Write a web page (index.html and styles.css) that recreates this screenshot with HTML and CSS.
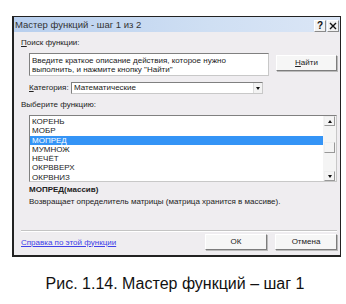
FILE: index.html
```html
<!DOCTYPE html>
<html lang="ru">
<head>
    <meta charset="UTF-8">
    <title>Мастер функций</title>
    <link rel="stylesheet" href="styles.css">
</head>
<body>
    <div class="page">
        <!-- Dialog window -->
        <div class="dialog">
            <div class="titlebar">
                <span class="title">Мастер функций - шаг 1 из 2</span>
                <div class="title-buttons">
                    <span class="tbtn">?</span>
                    <span class="tbtn">
                        <svg width="8" height="8" viewBox="0 0 8 8"><path d="M1 1 L7 7 M7 1 L1 7" stroke="#111" stroke-width="1.4"/></svg>
                    </span>
                </div>
            </div>

            <div class="content">
                <div class="label"><u>П</u>оиск функции:</div>

                <div class="search-row">
                    <div class="search-box">Введите краткое описание действия, которое нужно<br>выполнить, и нажмите кнопку "Найти"</div>
                    <div class="btn find-btn"><u>Н</u>айти</div>
                </div>

                <div class="category-row">
                    <span class="cat-label"><u>К</u>атегория:</span>
                    <div class="combo">
                        <span>Математические</span>
                        <span class="combo-arrow"></span>
                    </div>
                </div>

                <div class="label list-label">Выберите функцию:</div>

                <div class="list">
                    <div class="items">
                        <div class="item">КОРЕНЬ</div>
                        <div class="item">МОБР</div>
                        <div class="item selected">МОПРЕД</div>
                        <div class="item">МУМНОЖ</div>
                        <div class="item">НЕЧЁТ</div>
                        <div class="item">ОКРВВЕРХ</div>
                        <div class="item">ОКРВНИЗ</div>
                    </div>
                    <div class="scrollbar">
                        <span class="sb-btn"><span class="arr-up"></span></span>
                        <span class="sb-thumb"></span>
                        <span class="sb-btn"><span class="arr-down"></span></span>
                    </div>
                </div>

                <div class="signature">МОПРЕД(массив)</div>
                <div class="description">Возвращает определитель матрицы (матрица хранится в массиве).</div>

                <div class="separator"></div>

                <div class="footer">
                    <a class="help-link" href="#">Справка по этой функции</a>
                    <div class="footer-buttons">
                        <div class="btn ok-btn">ОК</div>
                        <div class="btn cancel-btn">Отмена</div>
                    </div>
                </div>
            </div>
        </div>

        <p class="caption">Рис. 1.14. Мастер функций – шаг 1</p>
    </div>
</body>
</html>
```

FILE: styles.css
```css
/* Page */
html, body {
    margin: 0;
    padding: 0;
    background: #fff;
}

.page {
    width: 346px;
    height: 304px;
    padding-top: 16px;
    box-sizing: border-box;
}

/* Dialog window */
.dialog {
    margin-left: 12px;
    width: 329px;
    height: 241px;
    box-sizing: border-box;
    border: 1px solid #222;
    border-left-width: 2px;
    border-bottom-width: 2px;
    background: #efedf0;
    font-family: "Liberation Sans", Arial, sans-serif;
    font-size: 8px;
    color: #222;
    display: flex;
    flex-direction: column;
}

.titlebar {
    height: 15px;
    background: linear-gradient(to right, #b8cfee, #cfdff3 60%, #dbe6f6);
    display: flex;
    align-items: flex-start;
    justify-content: space-between;
    padding-left: 1px;
}

.title {
    font-size: 9.5px;
    color: #333;
    line-height: 15px;
}

.title-buttons {
    display: flex;
    gap: 1px;
    margin-top: 3px;
    margin-right: 1px;
}

.tbtn {
    width: 12px;
    height: 12px;
    box-sizing: border-box;
    border: 1px solid #8a8a8a;
    border-top-color: #fff;
    border-left-color: #fff;
    background: #f2f2f2;
    font-size: 10px;
    font-weight: bold;
    line-height: 10px;
    text-align: center;
    color: #111;
    display: flex;
    align-items: center;
    justify-content: center;
}

.content {
    padding: 0 3px 0 7px;
}

.label {
    margin-top: 6px;
    line-height: 10px;
}

/* Search */
.search-row {
    display: flex;
    margin-top: 5px;
    padding-left: 8px;
}

.search-box {
    width: 240px;
    height: 23px;
    box-sizing: border-box;
    border: 1px solid #c8c8c8;
    border-left-color: #808080;
    border-top-color: #808080;
    background: #fff;
    padding: 3px 0 0 2px;
    line-height: 8.5px;
}

.btn {
    box-sizing: border-box;
    border: 1px solid #7d7d7d;
    border-top-color: #fff;
    border-left-color: #fff;
    background: #f6f6f6;
    text-align: center;
    box-shadow: 1px 1px 0 #bbb;
}

.find-btn {
    width: 61px;
    height: 16px;
    line-height: 14px;
    margin-left: 7px;
    margin-top: 2px;
}

/* Category */
.category-row {
    display: flex;
    align-items: center;
    margin-top: 6px;
    padding-left: 8px;
    height: 11px;
}

.cat-label {
    width: 42px;
}

.combo {
    width: 192px;
    height: 12px;
    box-sizing: border-box;
    border: 1px solid #c8c8c8;
    border-left-color: #808080;
    border-top-color: #808080;
    background: #fff;
    display: flex;
    align-items: center;
    justify-content: space-between;
    padding-left: 2px;
}

.combo-arrow {
    width: 9px;
    height: 10px;
    box-sizing: border-box;
    border-left: 1px solid #ddd;
    background: #f3f3f3;
    position: relative;
}

.combo-arrow::after {
    content: "";
    position: absolute;
    left: 2px;
    top: 4px;
    border-left: 2.5px solid transparent;
    border-right: 2.5px solid transparent;
    border-top: 3px solid #111;
}

.list-label {
    margin-top: 7px;
}

/* Function list */
.list {
    margin-top: 5px;
    margin-left: 8px;
    width: 308px;
    height: 67px;
    box-sizing: border-box;
    border: 1px solid #c8c8c8;
    border-left-color: #808080;
    border-top-color: #808080;
    background: #fff;
    display: flex;
}

.items {
    flex: 1;
    padding-top: 1px;
}

.item {
    height: 9.3px;
    line-height: 9.3px;
    padding-left: 2px;
}

.item.selected {
    background: #3494f6;
    color: #fff;
}

.scrollbar {
    width: 13px;
    display: flex;
    flex-direction: column;
    justify-content: space-between;
    align-items: center;
    background: #f4f4f4;
    position: relative;
}

.sb-btn {
    width: 11px;
    height: 10px;
    box-sizing: border-box;
    border: 1px solid #999;
    border-top-color: #eee;
    border-left-color: #eee;
    display: flex;
    align-items: center;
    justify-content: center;
}

.arr-up {
    border-left: 2.5px solid transparent;
    border-right: 2.5px solid transparent;
    border-bottom: 3px solid #111;
}

.arr-down {
    border-left: 2.5px solid transparent;
    border-right: 2.5px solid transparent;
    border-top: 3px solid #111;
}

.sb-thumb {
    position: absolute;
    left: 1px;
    top: 26px;
    width: 11px;
    height: 11px;
    box-sizing: border-box;
    border: 1px solid #999;
    border-top-color: #eee;
    border-left-color: #eee;
}

/* Description */
.signature {
    margin-top: 3px;
    padding-left: 8px;
    font-weight: bold;
    line-height: 10px;
}

.description {
    margin-top: 2px;
    padding-left: 8px;
    line-height: 10px;
}

.separator {
    margin-top: 23px;
    height: 1px;
    background: #c4c4c4;
    border-bottom: 1px solid #fff;
}

/* Footer */
.footer {
    display: flex;
    justify-content: space-between;
    align-items: center;
    margin-top: 2px;
}

.help-link {
    color: #4040e8;
    text-decoration: underline;
}

.footer-buttons {
    display: flex;
    gap: 8px;
}

.ok-btn,
.cancel-btn {
    width: 62px;
    height: 16px;
    line-height: 14px;
}

/* Figure caption */
.caption {
    margin: 17px 0 0;
    text-align: center;
    font-family: "Liberation Sans", Arial, sans-serif;
    font-size: 16px;
    line-height: 19px;
    color: #111;
    padding-left: 4px;
}
```
